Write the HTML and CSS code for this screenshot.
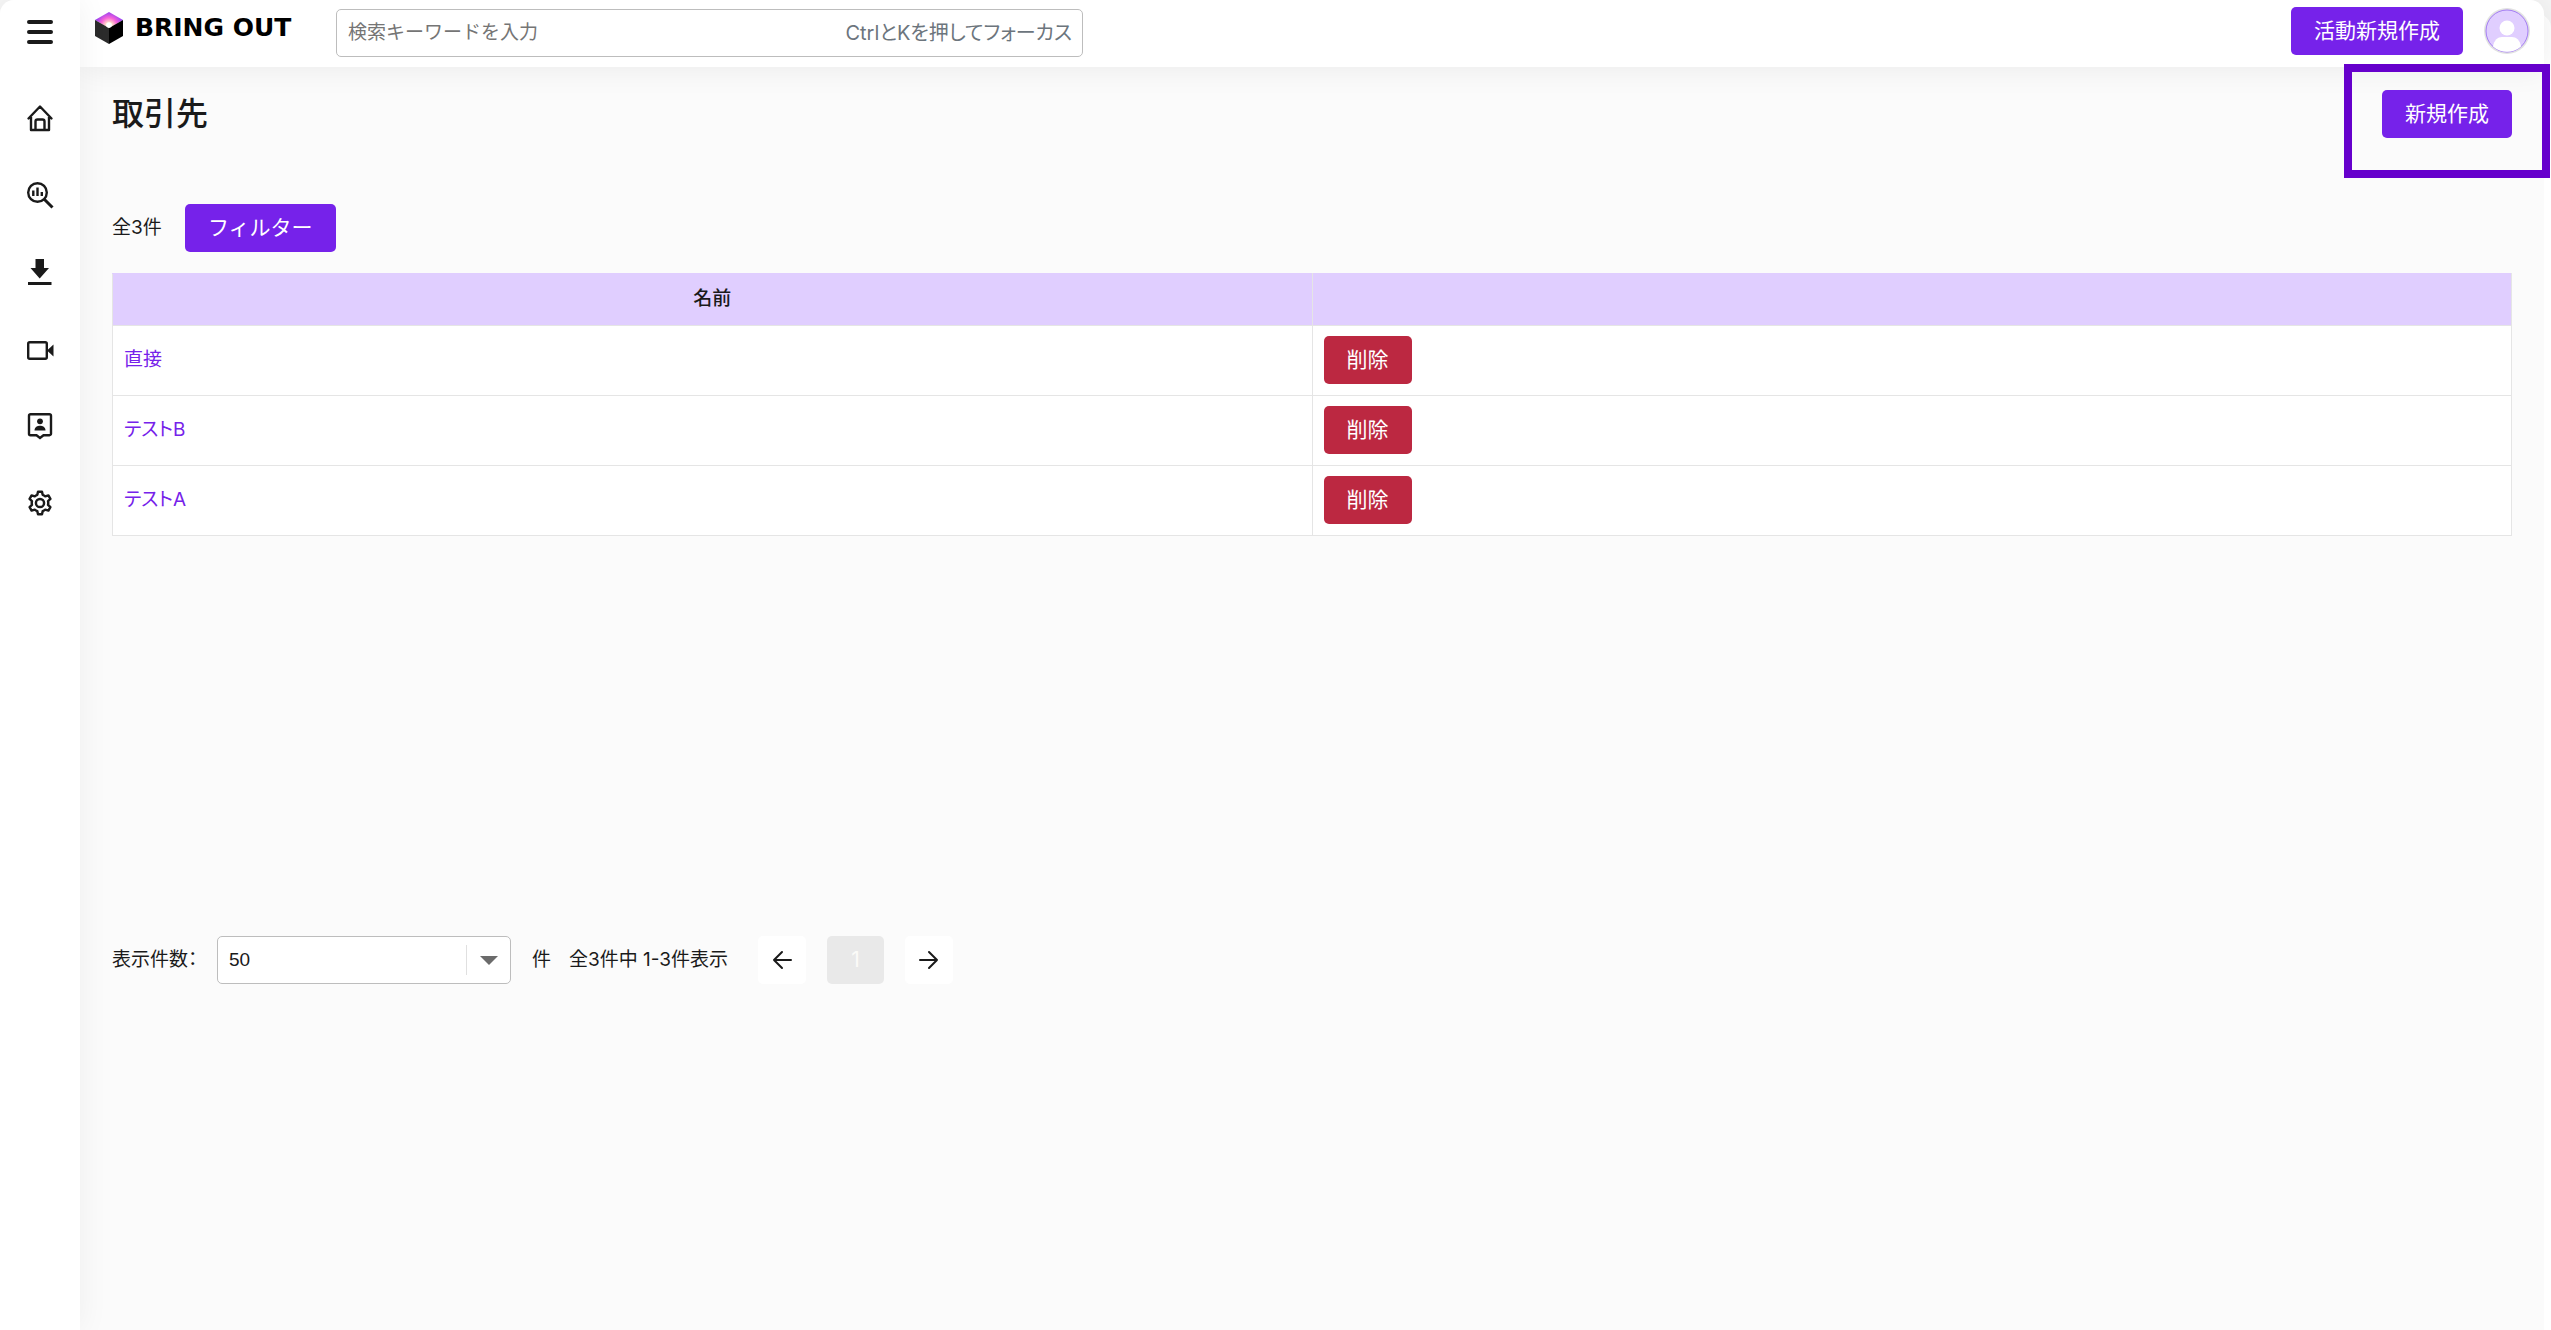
FILE: index.html
```html
<!DOCTYPE html>
<html lang="ja">
<head>
<meta charset="utf-8">
<title>取引先 | BRING OUT</title>
<link rel="stylesheet" href="styles.css">
</head>
<body>
<div class="app">
  <nav class="sidebar" aria-label="メインメニュー">
    <button class="menu-toggle" type="button" aria-label="メニュー">
      <svg class="icon" viewBox="0 0 28 28"><path d="M3 4h22M3 14h22M3 24h22" stroke="currentColor" stroke-width="4" stroke-linecap="round"/></svg>
    </button>
    <a class="nav-link" href="#home" aria-label="ホーム">
      <svg class="icon" viewBox="0 0 28 28" fill="none" stroke="currentColor" stroke-width="2.4" stroke-linejoin="round" stroke-linecap="round"><path d="M2.5 14.5 14 2.5l11.500 12M5 13v13h18V13M9.500 26v-8.500a2 2 0 0 1 2-2h5a2 2 0 0 1 2 2V26"/></svg>
    </a>
    <a class="nav-link" href="#analysis" aria-label="分析">
      <svg class="icon" viewBox="0 0 28 28" fill="none" stroke="currentColor" stroke-width="2.4"><circle cx="11.500" cy="11.500" r="9.300"/><path d="m18 18 8.500 8.500" stroke-width="3"/><path d="M7.300 9.500v5.500M11.500 6.500v8.500M15.800 11v4"/></svg>
    </a>
    <a class="nav-link" href="#download" aria-label="ダウンロード">
      <svg class="icon" viewBox="0 0 28 28" fill="currentColor"><path d="M9.500 1h8.500v9h5L13.700 20.500 4.500 10h5zM2 24h23.500v3H2z"/></svg>
    </a>
    <a class="nav-link" href="#video" aria-label="ビデオ">
      <svg class="icon" viewBox="0 0 28 28"><rect x="2.200" y="7.200" width="18.600" height="16.600" rx="1.500" fill="none" stroke="currentColor" stroke-width="2.400"/><path d="m21 15.500 6.500-6v12z" fill="currentColor"/></svg>
    </a>
    <a class="nav-link" href="#contacts" aria-label="連絡先">
      <svg class="icon" viewBox="0 0 28 28"><path d="M4.500 2.200h19a1.500 1.500 0 0 1 1.500 1.500v18a1.500 1.500 0 0 1-1.500 1.500h-6L14 26l-3.500-2.800h-6A1.500 1.500 0 0 1 3 21.700v-18a1.500 1.500 0 0 1 1.500-1.500z" fill="none" stroke="currentColor" stroke-width="2.400"/><circle cx="14" cy="9.300" r="2.900" fill="currentColor"/><path d="M8.500 18.500c0-3.500 3-4.800 5.500-4.800s5.500 1.300 5.500 4.800z" fill="currentColor"/></svg>
    </a>
    <a class="nav-link" href="#settings" aria-label="設定">
      <svg class="icon" viewBox="0 0 24 24" fill="none" stroke="currentColor" stroke-width="2.100" stroke-linejoin="round"><path d="M10.300 2.300h3.400l.6 2.700a7.400 7.400 0 0 1 2.200 1.300l2.700-.8 1.700 3-2 1.900a7.400 7.400 0 0 1 0 3.200l2 1.900-1.700 3-2.700-.8a7.400 7.400 0 0 1-2.200 1.300l-.6 2.700h-3.400L9.700 19a7.400 7.400 0 0 1-2.200-1.300l-2.700.8-1.700-3 2-1.900a7.400 7.400 0 0 1 0-3.200l-2-1.900 1.700-3 2.700.8A7.400 7.400 0 0 1 9.700 5z"/><circle cx="12" cy="12" r="3.500"/></svg>
    </a>
  </nav>
  <div class="content">
    <header class="header">
      <a class="logo" href="#home">
        <svg class="logo-mark" viewBox="0 0 28 32">
          <defs><radialGradient id="glow" gradientUnits="userSpaceOnUse" cx="14" cy="14" r="15"><stop offset="0" stop-color="#fff"/><stop offset=".25" stop-color="#ffd9c8"/><stop offset=".55" stop-color="#f863d8"/><stop offset="1" stop-color="#8a3cf5"/></radialGradient></defs>
          <path d="M14 0 28 8 14 16 0 8z" fill="url(#glow)"/>
          <path d="m0 8 14 8v16L0 24z" fill="#2b2b2b"/>
          <path d="m28 8-14 8v16l14-8z" fill="#000"/>
          <circle cx="14" cy="13" r="2.800" fill="#fff"/>
        </svg>
        <span class="logo-text">BRING OUT</span>
      </a>
      <label class="search">
        <input class="search-input" type="text" placeholder="検索キーワードを入力" aria-label="検索キーワード">
        <span class="search-hint">CtrlとKを押してフォーカス</span>
      </label>
      <div class="header-actions">
        <button class="btn btn-primary" type="button">活動新規作成</button>
        <button class="avatar" type="button" aria-label="アカウント">
          <svg viewBox="0 0 46 46"><circle cx="23" cy="23" r="23" fill="#e2e2e2"/><circle cx="23" cy="23" r="21" fill="#e0ceff" stroke="#a47cf5"/><circle cx="23" cy="20" r="7.500" fill="#fff"/><path d="M9 38.500C10 32 14 29 18 29h10c4 0 8 3 9 9.500a21 21 0 0 1-28 0z" fill="#fff"/></svg>
        </button>
      </div>
    </header>
    <main class="main">
      <div class="title-row">
        <h1 class="title">取引先</h1>
        <div class="highlight"><button class="btn btn-primary" type="button">新規作成</button></div>
      </div>
      <div class="toolbar">
        <span class="count">全3件</span>
        <button class="btn btn-primary" type="button">フィルター</button>
      </div>
      <div class="table-area">
        <table class="table">
          <thead><tr><th scope="col">名前</th><th></th></tr></thead>
          <tbody>
            <tr><td><a href="#a1">直接</a></td><td><button class="btn btn-danger" type="button">削除</button></td></tr>
            <tr><td><a href="#a2">テストB</a></td><td><button class="btn btn-danger" type="button">削除</button></td></tr>
            <tr><td><a href="#a3">テストA</a></td><td><button class="btn btn-danger" type="button">削除</button></td></tr>
          </tbody>
        </table>
      </div>
      <div class="pager">
        <label class="pager-label" for="page-size">表示件数：</label>
        <span class="select">
          <select id="page-size"><option>50</option></select>
        </span>
        <span class="unit">件</span>
        <span class="range">全3件中 1-3件表示</span>
        <button class="page-btn" type="button" aria-label="前へ"><svg viewBox="0 0 20 20"><path d="M19 10H2M10 2l-8 8 8 8"/></svg></button>
        <button class="page-btn page-current" type="button" disabled>1</button>
        <button class="page-btn" type="button" aria-label="次へ"><svg viewBox="0 0 20 20"><path d="M1 10h17M10 2l8 8-8 8"/></svg></button>
      </div>
    </main>
  </div>
</div>
</body>
</html>
```
FILE: styles.css
```css
* { box-sizing: border-box; }
body {
  margin: 0;
  background: #f5f5f5;
  color: #1a1a1a;
  font: 19px/28px Inter, "Noto Sans CJK JP", sans-serif;
}
button, input, select { font: inherit; color: inherit; }
button { cursor: pointer; }
a { color: #7622ea; text-decoration: none; }

.app {
  display: flex;
  min-height: 100vh;
  margin-right: 7px;
  background: #fbfbfb;
  border-radius: 14px 14px 0 0;
  box-shadow: 7px 14px 0 #fff;
}
.sidebar {
  position: relative;
  z-index: 2;
  flex: none;
  width: 80px;
  display: flex;
  flex-direction: column;
  align-items: center;
  background: #fff;
  border-top-left-radius: 14px;
  box-shadow: 0 0 32px rgba(0, 0, 0, .06);
}
.menu-toggle, .nav-link {
  display: flex;
  align-items: center;
  justify-content: center;
  width: 80px;
  height: 77px;
  padding: 0;
  border: 0;
  background: none;
  color: #1a1a1a;
}
.menu-toggle { height: 64px; margin-bottom: 15px; }
.icon { width: 28px; height: 28px; }

.content { flex: 1; min-width: 0; }
.header {
  position: relative;
  z-index: 1;
  display: flex;
  align-items: flex-start;
  height: 67px;
  padding: 7px 14px 0 15px;
  background: #fff;
  border-top-right-radius: 14px;
  box-shadow: 0 0 32px rgba(0, 0, 0, .08);
}
.logo { display: flex; align-items: center; gap: 12px; width: 241px; height: 42px; color: #000; }
.logo-mark { width: 28px; height: 32px; }
.logo-text { font: bold 25px/32px "DejaVu Sans", sans-serif; white-space: nowrap; }
.search {
  display: flex;
  align-items: center;
  width: 747px;
  height: 48px;
  margin-top: 2px;
  padding: 0 10px 0 11px;
  border: 1px solid #bdbdbd;
  border-radius: 5px;
  background: #fff;
}
.search-input { flex: 1; min-width: 0; padding: 0; border: 0; outline: 0; background: none; }
.search-input::placeholder { color: #757575; opacity: 1; }
.search-hint { color: #6c757d; font-size: 20px; white-space: nowrap; font-feature-settings: "palt"; }
.header-actions { display: flex; align-items: center; gap: 21px; margin-left: auto; }
.btn {
  display: block;
  height: 48px;
  padding: 0 23px;
  border: 0;
  border-radius: 5px;
  color: #fff;
  font-size: 21px;
  font-weight: 400;
  line-height: 46px;
  white-space: nowrap;
}
.btn-primary { background: #7622ea; }
.btn-danger { background: #bc2841; }
.avatar { width: 46px; height: 46px; padding: 0; border: 0; background: none; }
.avatar svg { display: block; }

.main { padding: 0 32px; }
.title-row { display: flex; align-items: flex-start; justify-content: space-between; height: 137px; }
.title { margin: 24px 0 0; font-size: 32px; line-height: 46px; font-weight: 500; }
.highlight {
  position: relative;
  z-index: 3;
  height: 114px;
  margin: -3px -38px 0 0;
  padding: 18px 30px;
  border: 8px solid #6600cc;
}
.toolbar { display: flex; align-items: center; gap: 21px; }
.count, .range, .unit, .pager-label { white-space: nowrap; }
.count { min-width: 52px; }
.table-area { min-height: 684px; padding-top: 21px; }
.table { width: 100%; table-layout: fixed; border-collapse: collapse; background: #fff; }
.table th, .table td { border: 1px solid #e5e5e5; padding: 10px 11px 11px; text-align: left; }
.table th { height: 52px; background: #e0ceff; text-align: center; font-weight: 500; border-top-color: #e0ceff; }
.table td a { font-feature-settings: "palt"; }

.pager { display: flex; align-items: center; gap: 21px; }
.pager-label { width: 84px; font-feature-settings: "palt"; }
.select { position: relative; width: 294px; height: 48px; }
.select select {
  appearance: none;
  width: 100%;
  height: 48px;
  padding: 0 11px;
  border: 1px solid #bdbdbd;
  border-radius: 5px;
  background: #fff;
  font-family: "Liberation Sans", sans-serif;
}
.select::before {
  content: "";
  position: absolute;
  top: 9px;
  right: 44px;
  height: 30px;
  border-left: 1px solid #e0e0e0;
}
.select::after {
  content: "";
  position: absolute;
  top: 20px;
  right: 13px;
  border: 9px solid transparent;
  border-top-color: #6b6b6b;
  border-bottom: 0;
}
.unit { margin-right: -3px; }
.range { min-width: 168px; }
.page-btn {
  display: flex;
  align-items: center;
  justify-content: center;
  width: 48px;
  height: 48px;
  padding: 0;
  border: 0;
  border-radius: 5px;
  background: #fff;
}
.page-btn svg { width: 20px; height: 20px; fill: none; stroke: currentColor; stroke-width: 2; stroke-linecap: round; stroke-linejoin: round; }
.page-current { width: 57px; background: #e9e9e9; color: #fbfbf8; font-size: 21px; }
```
